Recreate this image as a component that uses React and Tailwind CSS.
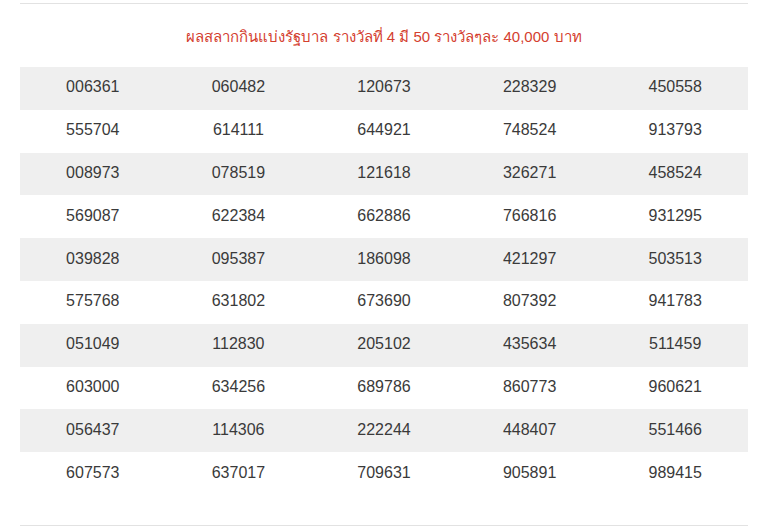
import React from 'react';

const rows = [
  ['006361', '060482', '120673', '228329', '450558'],
  ['555704', '614111', '644921', '748524', '913793'],
  ['008973', '078519', '121618', '326271', '458524'],
  ['569087', '622384', '662886', '766816', '931295'],
  ['039828', '095387', '186098', '421297', '503513'],
  ['575768', '631802', '673690', '807392', '941783'],
  ['051049', '112830', '205102', '435634', '511459'],
  ['603000', '634256', '689786', '860773', '960621'],
  ['056437', '114306', '222244', '448407', '551466'],
  ['607573', '637017', '709631', '905891', '989415'],
];

export default function App() {
  return (
    <div className="w-[764px] h-[527px] bg-white pl-5 pr-4 pt-[3px] font-['Liberation_Sans',Arial,sans-serif]">
      <div className="border-t border-[#e2e2e2]">
        <h3 className="h-[63px] pt-[23px] text-center text-[15px] leading-[20px] text-[#d4402f] font-normal">
          ผลสลากกินแบ่งรัฐบาล รางวัลที่ 4 มี 50 รางวัลๆละ 40,000 บาท
        </h3>
        <div className="flex flex-col">
          {rows.map((row, i) => (
            <div
              key={i}
              className={`grid grid-cols-5 h-[42.8px] items-center pb-[2px] ${i % 2 === 0 ? 'bg-[#efefef]' : 'bg-white'}`}
            >
              {row.map((n) => (
                <span key={n} className="text-center text-[16px] text-[#3a3a3a]">{n}</span>
              ))}
            </div>
          ))}
        </div>
        <div className="mt-[30px] border-t border-[#e2e2e2]" />
      </div>
    </div>
  );
}
